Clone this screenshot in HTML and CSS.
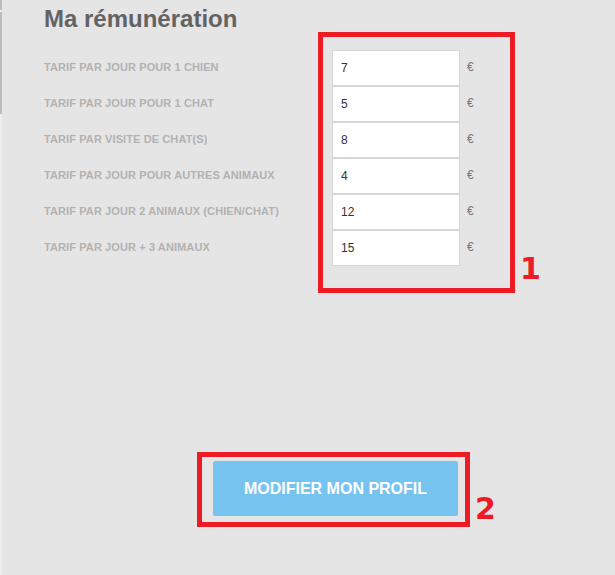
FILE: index.html
```html
<!DOCTYPE html>
<html lang="fr">
<head>
<meta charset="utf-8">
<title>Ma rémunération</title>
<link rel="stylesheet" href="styles.css">
</head>
<body>
<div class="layout">
  <div class="edge">
    <span class="edge-top"></span>
    <span class="edge-gap"></span>
    <span class="edge-main"></span>
    <span class="edge-rest"></span>
  </div>
  <main class="page">
    <h1 class="title">Ma rémunération</h1>
    <div class="rates">
      <label class="rate-label">TARIF PAR JOUR POUR 1 CHIEN</label>
      <input class="rate-input" type="text" value="7">
      <span class="rate-unit">€</span>

      <label class="rate-label">TARIF PAR JOUR POUR 1 CHAT</label>
      <input class="rate-input" type="text" value="5">
      <span class="rate-unit">€</span>

      <label class="rate-label">TARIF PAR VISITE DE CHAT(S)</label>
      <input class="rate-input" type="text" value="8">
      <span class="rate-unit">€</span>

      <label class="rate-label">TARIF PAR JOUR POUR AUTRES ANIMAUX</label>
      <input class="rate-input" type="text" value="4">
      <span class="rate-unit">€</span>

      <label class="rate-label">TARIF PAR JOUR 2 ANIMAUX (CHIEN/CHAT)</label>
      <input class="rate-input" type="text" value="12">
      <span class="rate-unit">€</span>

      <label class="rate-label">TARIF PAR JOUR + 3 ANIMAUX</label>
      <input class="rate-input" type="text" value="15">
      <span class="rate-unit">€</span>
    </div>
    <div class="actions">
      <button class="submit" type="button">MODIFIER MON PROFIL</button>
    </div>
  </main>
</div>
<div class="mark mark-box mark-box-1"></div>
<div class="mark mark-num mark-num-1">1</div>
<div class="mark mark-box mark-box-2"></div>
<div class="mark mark-num mark-num-2">2</div>
</body>
</html>
```

FILE: styles.css
```css
html, body {
  margin: 0;
  padding: 0;
  height: 100%;
  background: #e5e5e5;
  font-family: "Liberation Sans", Arial, sans-serif;
  overflow: hidden;
}

.layout {
  display: flex;
  min-height: 575px;
}

.edge {
  width: 2px;
  display: flex;
  flex-direction: column;
}
.edge-top { height: 10px; background: #bdbdbd; }
.edge-gap { height: 2px; background: #efefef; }
.edge-main { height: 102px; background: #bdbdbd; }
.edge-rest { flex: 1; background: #eeeeee; }

.page {
  flex: 1;
  padding: 5px 0 0 42px;
}

.title {
  margin: 0 0 18px;
  font-size: 24px;
  line-height: 27px;
  font-weight: bold;
  color: #636363;
}

.rates {
  display: grid;
  grid-template-columns: 288px 128px auto;
  grid-auto-rows: 36px;
  align-items: center;
}

.rate-label {
  font-size: 11px;
  font-weight: bold;
  letter-spacing: 0.1px;
  color: #b2b2b2;
  margin-top: -2px;
}

.rate-input {
  box-sizing: border-box;
  width: 128px;
  height: 36px;
  margin: 0;
  border: 1px solid #d6d6d6;
  background: #fff;
  padding: 0 8px;
  font-family: "Liberation Sans", Arial, sans-serif;
  font-size: 12px;
  color: #333;
  outline: none;
}

.rate-unit {
  margin-left: 7px;
  font-size: 12px;
  color: #777;
  margin-top: -2px;
}

.actions {
  margin-top: 195px;
  padding-left: 169px;
}

.submit {
  width: 245px;
  height: 55px;
  border: 0;
  border-radius: 2px;
  background: #76c3ef;
  color: #fff;
  font-family: "Liberation Sans", Arial, sans-serif;
  font-size: 16px;
  font-weight: bold;
  padding: 0;
}

.mark {
  position: absolute;
}
.mark-box {
  box-sizing: border-box;
  border: 5px solid #ed1c24;
}
.mark-box-1 {
  left: 318px;
  top: 32px;
  width: 197px;
  height: 261px;
}
.mark-box-2 {
  left: 197px;
  top: 452px;
  width: 273px;
  height: 75px;
}
.mark-num {
  font-family: "DejaVu Sans", sans-serif;
  font-weight: bold;
  font-size: 30px;
  line-height: 30px;
  color: #ed1c24;
}
.mark-num-1 {
  left: 520px;
  top: 254px;
}
.mark-num-2 {
  left: 475px;
  top: 494px;
}
```
